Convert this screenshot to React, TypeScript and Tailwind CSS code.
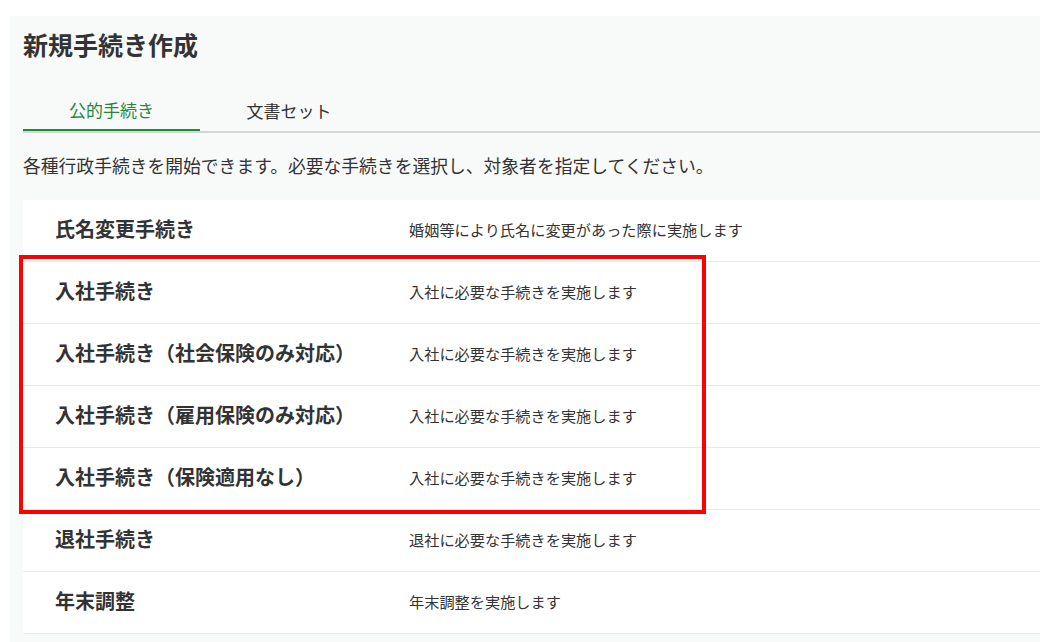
const rows = [
  { name: '氏名変更手続き', desc: '婚姻等により氏名に変更があった際に実施します' },
  { name: '入社手続き', desc: '入社に必要な手続きを実施します' },
  { name: '入社手続き（社会保険のみ対応）', desc: '入社に必要な手続きを実施します' },
  { name: '入社手続き（雇用保険のみ対応）', desc: '入社に必要な手続きを実施します' },
  { name: '入社手続き（保険適用なし）', desc: '入社に必要な手続きを実施します' },
  { name: '退社手続き', desc: '退社に必要な手続きを実施します' },
  { name: '年末調整', desc: '年末調整を実施します' },
];

export default function App() {
  return (
    <div
      className="h-screen bg-white pt-4 pl-[10px] text-[#333333] overflow-hidden"
      style={{ fontFamily: '"Noto Sans CJK JP", "Noto Sans", sans-serif' }}
    >
      <div className="bg-[#f8f9f9] pl-[13px] h-full">
        <h1 className="pt-[12px] text-[25px] leading-[32px] font-bold">新規手続き作成</h1>

        <div className="mt-[31px] flex border-b-2 border-[#d6d6d6]">
          <div className="w-[177px] h-[40px] -mb-[2px] border-b-2 border-[#1e8a3c] flex items-center justify-center text-[17px] text-[#1e8a3c]">
            公的手続き
          </div>
          <div className="w-[178px] h-[40px] flex items-center justify-center text-[17px] text-[#333333]">
            文書セット
          </div>
        </div>

        <p className="mt-5 text-[17.8px] leading-[24px]">
          各種行政手続きを開始できます。必要な手続きを選択し、対象者を指定してください。
        </p>

        <div className="relative mt-[23px] bg-white">
          {rows.map((r) => (
            <div key={r.name} className="h-[62px] flex items-center border-b border-[#e9e9e9] pl-8 pb-[3px]">
              <div className="w-[354px] shrink-0 text-[20px] font-bold">{r.name}</div>
              <div className="text-[15.2px] text-[#333333]">{r.desc}</div>
            </div>
          ))}
          <div className="absolute -left-[4px] top-[55px] w-[687px] h-[259px] border-4 border-[#ff0000] pointer-events-none" />
        </div>
      </div>
    </div>
  );
}
